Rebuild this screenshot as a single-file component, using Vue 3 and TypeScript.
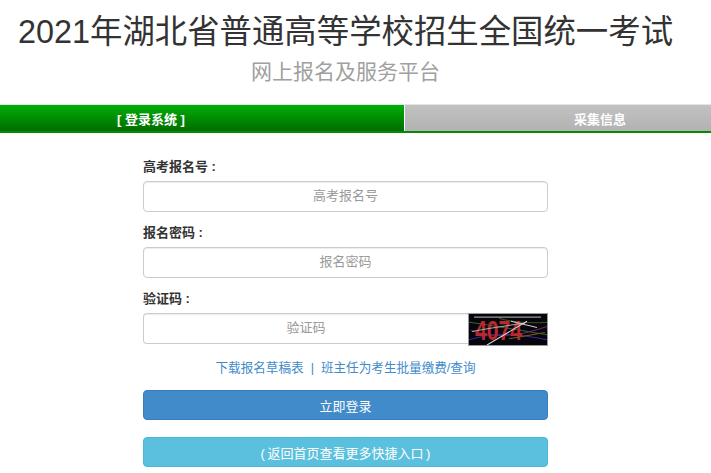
<script setup lang="ts">
interface Field {
  label: string
  placeholder: string
}
const fields: Field[] = [
  { label: '高考报名号 :', placeholder: '高考报名号' },
  { label: '报名密码 :', placeholder: '报名密码' },
]
</script>

<template>
  <div class="page">
    <header class="head">
      <h1 class="title">2021年湖北省普通高等学校招生全国统一考试</h1>
      <h2 class="subtitle">网上报名及服务平台</h2>
    </header>
    <nav class="tabs">
      <div class="tab tab-on"><span>[ 登录系统 ]</span></div>
      <div class="tab tab-off"><span>采集信息</span></div>
    </nav>
    <form class="form" @submit.prevent>
      <div v-for="f in fields" :key="f.label" class="group">
        <label class="label">{{ f.label }}</label>
        <input class="input" type="text" :placeholder="f.placeholder" />
      </div>
      <div class="group">
        <label class="label">验证码 :</label>
        <div class="captcha-row">
          <input class="input input-captcha" type="text" placeholder="验证码" />
          <svg class="captcha" viewBox="0 0 78 30" preserveAspectRatio="none">
            <rect width="78" height="30" fill="#08060c" />
            <path d="M0 8 Q30 12 78 20" stroke="#2a6a3a" fill="none" />
            <path d="M0 25 Q30 15 78 25" stroke="#3a2a90" fill="none" />
            <path d="M2 16 Q35 27 78 12" stroke="#6a2a70" fill="none" />
            <path d="M30 4 Q50 10 78 8" stroke="#3c5a20" fill="none" />
            <text x="6" y="25" class="captcha-text" textLength="47" lengthAdjust="spacingAndGlyphs">4074</text>
            <path d="M5 3 H72" stroke="#9a9a9a" stroke-width="1.2" />
            <path d="M3 17 Q30 12 56 9" stroke="#aaa" fill="none" />
            <path d="M18 30 L58 7" stroke="#ddd" />
            <path d="M42 7 L68 13" stroke="#ccc" />
            <path d="M40 24 L76 18" stroke="#7a5a2a" />
          </svg>
        </div>
      </div>
      <div class="links">
        <a class="link">下载报名草稿表</a>
        <span class="sep">|</span>
        <a class="link">班主任为考生批量缴费/查询</a>
      </div>
      <button class="btn btn-primary" type="button">立即登录</button>
      <button class="btn btn-info" type="button">( 返回首页查看更多快捷入口 )</button>
    </form>
  </div>
</template>

<style>
html, body { margin: 0; background: #fff; overflow: hidden; }
</style>

<style scoped>
.page {
  width: 711px;
  height: 473px;
  overflow: hidden;
  font-family: "Liberation Sans", "Noto Sans CJK SC", sans-serif;
  color: #333;
}
.head {
  width: 691px;
  height: 104px;
  text-align: center;
}
.title {
  margin: 0;
  padding-top: 12px;
  font-size: 32.4px;
  line-height: 40px;
  font-weight: 400;
  white-space: nowrap;
}
.subtitle {
  margin: 6px 0 0;
  font-size: 21px;
  line-height: 28px;
  font-weight: 400;
  color: #a0a0a0;
}
.tabs {
  display: flex;
  height: 26px;
  border-top: 1px solid #e4e4e4;
  border-bottom: 2px solid #058a05;
  font-size: 13px;
  font-weight: 700;
  color: #fff;
}
.tab {
  display: flex;
  align-items: center;
}
.tab-on {
  width: 404px;
  padding-left: 117px;
  box-sizing: border-box;
  background: linear-gradient(#00ad06, #006d00);
}
.tab-off {
  flex: 1;
  margin-left: 1px;
  padding-left: 169px;
  background: linear-gradient(#c2c2c2, #b2b2b2);
}
.form {
  width: 405px;
  margin: 0 0 0 143px;
  padding-top: 24px;
  display: flex;
  flex-direction: column;
}
.group {
  margin-bottom: 11px;
}
.label {
  display: block;
  height: 24px;
  font-size: 13px;
  line-height: 19px;
  font-weight: 700;
  color: #333;
}
.input {
  display: block;
  width: 100%;
  height: 31px;
  box-sizing: border-box;
  padding: 0 12px 3px;
  border: 1px solid #ccc;
  border-radius: 4px;
  background: #fff;
  text-align: center;
  font: inherit;
  font-size: 13px;
  box-shadow: inset 0 1px 1px rgba(0, 0, 0, 0.075);
  outline: none;
}
.input::placeholder {
  color: #999;
  opacity: 1;
}
.captcha-row {
  display: flex;
  align-items: flex-start;
}
.input-captcha {
  flex: 1;
  width: auto;
  min-width: 0;
  border-radius: 4px 0 0 4px;
  border-right: 0;
}
.captcha {
  display: block;
  flex: none;
  width: 80px;
  height: 33px;
  box-sizing: border-box;
  border: 1px solid #999;
}
.captcha-text {
  font-family: "Liberation Sans", sans-serif;
  font-size: 26px;
  font-weight: 700;
  fill: #b8282c;
}
.links {
  display: flex;
  justify-content: center;
  gap: 7px;
  height: 32px;
  margin-top: 1px;
  font-size: 12.6px;
  line-height: 20px;
  color: #428bca;
}
.btn {
  display: block;
  width: 100%;
  height: 30px;
  padding: 0;
  border-radius: 4px;
  font: inherit;
  font-size: 13px;
  color: #fff;
}
.btn-primary {
  background: #428bca;
  border: 1px solid #357ebd;
  margin-bottom: 17px;
}
.btn-info {
  background: #5bc0de;
  border: 1px solid #46b8da;
  word-spacing: -1px;
}
</style>
